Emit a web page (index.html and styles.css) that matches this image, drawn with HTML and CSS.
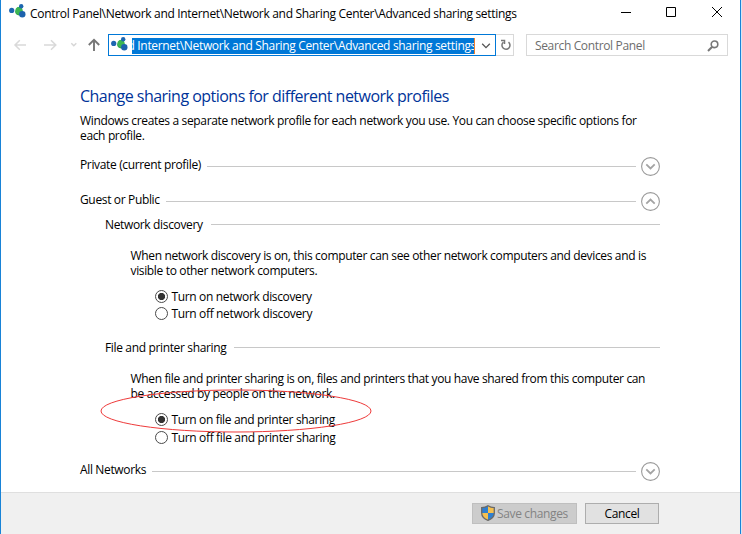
FILE: index.html
```
<!DOCTYPE html>
<html lang="en">
<head>
<meta charset="utf-8">
<title>Advanced sharing settings</title>
<link rel="stylesheet" href="styles.css">
</head>
<body>
<svg width="0" height="0" class="defs" aria-hidden="true">
  <symbol id="net" viewBox="0 0 17 14">
    <circle cx="2.7" cy="6.4" r="2.6" fill="#1d66b0"/>
    <path d="M8.5 3.2 12 2.2 14 8.5 10.5 11.5C8 11.7 6 9.8 6.1 7.6Z" fill="#2da34a"/>
    <circle cx="10" cy="6.6" r="3.6" fill="#3cb653"/>
    <circle cx="12.2" cy="2.3" r="2.2" fill="#1d66b0"/>
    <circle cx="13.3" cy="10.3" r="3.2" fill="#1d62ad"/>
  </symbol>
  <symbol id="down" viewBox="0 0 19 19">
    <circle cx="9.5" cy="9.5" r="8.9" fill="none" stroke="#9a9a9a" stroke-width="1.1"/>
    <path d="M5.300 7.300 9.500 11.400 13.700 7.300" fill="none" stroke="#a3a3a3" stroke-width="1.8"/>
  </symbol>
</svg>
<div class="window">
  <header class="titlebar">
    <svg class="net"><use href="#net"/></svg>
    <span class="title">Control Panel\Network and Internet\Network and Sharing Center\Advanced sharing settings</span>
    <svg class="controls" viewBox="0 0 112 14" fill="none" stroke="#000" stroke-width="1">
      <path d="M0 7.5H10M45.5 2.5H54.5V11.5H45.5ZM91 2 101 12M101 2 91 12"/>
    </svg>
  </header>
  <nav class="navbar">
    <svg class="arrows" viewBox="0 0 107 22" fill="none">
      <path d="M26 11H15M19.800 6.200 15 11 19.800 15.800M44 11H55.500M51 6.200 55.800 11 51 15.800" stroke="#d9d9d9" stroke-width="1.500"/>
      <path d="M71.300 9.300 73.800 11.800 76.300 9.300" stroke="#d5d5d5" stroke-width="1.400"/>
      <path d="M94 17V6M88.800 11 94 5.800 99.200 11" stroke="#777" stroke-width="1.900"/>
    </svg>
    <div class="address">
      <svg class="net"><use href="#net"/></svg>
      <div class="selection"><span>d Internet\Network and Sharing Center\Advanced sharing settings</span></div>
      <svg class="caret" viewBox="0 0 10 8"><path d="M1.200 1.800 5 5.600 8.800 1.800" fill="none" stroke="#555" stroke-width="1.300"/></svg>
    </div>
    <div class="refresh">
      <svg viewBox="0 0 12 12"><path d="M3.300 3.200A4 4 0 1 0 8.500 3.100M1 1.500H4.500V5" fill="none" stroke="#777" stroke-width="1.500"/></svg>
    </div>
    <div class="search">
      <span>Search Control Panel</span>
      <svg viewBox="0 0 12 12" fill="none" stroke="#777"><circle cx="7.500" cy="4.300" r="3.300" stroke-width="1.600"/><path d="M5.200 6.800 1 11" stroke-width="2"/></svg>
    </div>
  </nav>
  <main class="content">
    <h1>Change sharing options for different network profiles</h1>
    <p class="intro">Windows creates a separate network profile for each network you use. You can choose specific options for<br>each profile.</p>
    <div class="group private">
      <span>Private (current profile)</span><i class="rule"></i><svg class="chev"><use href="#down"/></svg>
    </div>
    <div class="group guest">
      <span>Guest or Public</span><i class="rule"></i><svg class="chev up"><use href="#down"/></svg>
    </div>
    <section class="discovery">
      <h2><span>Network discovery</span><i class="rule"></i></h2>
      <p>When network discovery is on, this computer can see other network computers and devices and is<br>visible to other network computers.</p>
      <div class="option"><i class="radio on"></i><span>Turn on network discovery</span></div>
      <div class="option"><i class="radio"></i><span>Turn off network discovery</span></div>
    </section>
    <section class="printer">
      <h2><span>File and printer sharing</span><i class="rule"></i></h2>
      <p>When file and printer sharing is on, files and printers that you have shared from this computer can<br>be accessed by people on the network.</p>
      <div class="option"><i class="radio on"></i><span>Turn on file and printer sharing</span></div>
      <div class="option"><i class="radio"></i><span>Turn off file and printer sharing</span></div>
      <svg class="mark" viewBox="0 0 272 44"><ellipse cx="136" cy="22" rx="135" ry="21" fill="none" stroke="#ee3a3a" stroke-width="1"/></svg>
    </section>
    <div class="group all">
      <span>All Networks</span><i class="rule"></i><svg class="chev"><use href="#down"/></svg>
    </div>
  </main>
  <footer class="footer">
    <button class="save" disabled>
      <svg viewBox="0 0 14 16"><path d="M7 .6C9 2 11 2.500 13.400 2.500V8C13.400 11.500 10.500 14 7 15.400 3.500 14 .6 11.500 .6 8V2.500C3 2.500 5 2 7 .6Z" fill="#f5c04f"/><path d="M7 .6V8H.6V2.500C3 2.500 5 2 7 .6ZM7 8H13.400C13.400 11.500 10.500 14 7 15.400Z" fill="#2f7fd0"/><path d="M7 .8C9 2.200 11 2.600 13.300 2.600V8C13.300 11.500 10.500 14 7 15.300 3.500 14 .7 11.500 .7 8V2.600C3 2.600 5 2.200 7 .8Z" fill="none" stroke="#6a6a6a" stroke-width="1.300"/></svg><span>Save changes</span>
    </button>
    <button class="cancel">Cancel</button>
  </footer>
</div>
</body>
</html>
```
FILE: styles.css
```
* { box-sizing: border-box; }
body {
  margin: 0;
  width: 742px;
  height: 534px;
  overflow: hidden;
  background: #d6e6f5;
  color: #000;
  font: 12px/15px "Open Sans", "Noto Sans", sans-serif;
  letter-spacing: -0.35px;
  white-space: nowrap;
}
svg { display: block; flex: none; }
.defs { display: none; }
.window {
  width: 741px;
  height: 534px;
  background: #fff;
  border: solid #1883d7;
  border-width: 0 1px;
  display: flex;
  flex-direction: column;
}
.net { width: 17px; height: 14px; }

.titlebar {
  height: 34px;
  padding: 4px 7px 0 8px;
  display: flex;
  align-items: flex-start;
}
.title { flex: 1; margin: 2px 0 0 4px; letter-spacing: -0.315px; }
.controls { width: 112px; height: 14px; margin-top: 1px; }

.navbar { height: 22px; display: flex; margin-left: -1px; }
.arrows { width: 107px; height: 22px; }
.address {
  width: 388px;
  margin-left: 1px;
  border: 1px solid #0078d7;
  display: flex;
  align-items: flex-start;
  padding: 2px 4px 0 2px;
}
.selection {
  width: 345px;
  height: 16px;
  margin: 1px 0 0 4px;
  background: #0078d7;
  color: #fff;
  overflow: hidden;
  display: flex;
  justify-content: flex-end;
  border-right: 1px solid #f08030;
  letter-spacing: -0.325px;
}
.selection span { margin-right: -2px; }
.caret { width: 10px; height: 8px; margin: 5px 0 0 6px; }
.refresh {
  width: 18px;
  border: 1px solid #d9d9d9;
  border-left: 0;
  padding: 4px 0 0 4px;
}
.refresh svg { width: 12px; height: 12px; }
.search {
  width: 202px;
  margin-left: 12px;
  border: 1px solid #d9d9d9;
  display: flex;
  justify-content: space-between;
  align-items: center;
  padding: 0 8px;
  color: #6d6d6d;
}
.search svg { width: 12px; height: 12px; margin-top: 1px; }

.content { width: 580px; height: 436px; margin-left: 79px; padding-top: 28px; }
h1 {
  margin: 0;
  font-size: 16px;
  font-weight: 400;
  line-height: 24px;
  letter-spacing: -0.52px;
  color: #003399;
}
p { margin: 0; }
.intro { margin-top: 5px; }
.group { height: 19px; display: flex; align-items: flex-start; }
.group .rule { margin: 9px 5px 0 6px; }
.rule { flex: 1; height: 1px; background: #c8c8c8; }
.chev { width: 19px; height: 19px; }
.up { transform: rotate(180deg); }
.private { margin-top: 14px; }
.guest { margin-top: 16px; }
section { padding-left: 25px; position: relative; }
h2 { margin: 0; font: inherit; display: flex; }
h2 .rule { margin: 7px 0 0 8px; }
section p { margin: 16px 0 10px 25.500px; }
.option { display: flex; align-items: center; height: 17px; padding-left: 50px; }
.radio {
  width: 13px;
  height: 13px;
  margin-right: 3.500px;
  border: 1px solid #4a4a4a;
  border-radius: 50%;
  background: #fff;
}
.radio.on { background: radial-gradient(circle, #333 3.2px, #fff 4px); }
.discovery { margin-top: 6px; height: 123px; }
.printer { height: 122px; }
.printer p { margin-bottom: 9px; }
.printer .option { height: 18px; }
.mark { position: absolute; left: 20px; top: 49px; width: 272px; height: 44px; }

.footer {
  flex: 1;
  background: #f0f0f0;
  border-top: 1px solid #dfdfdf;
  display: flex;
  gap: 8px;
  padding: 10px 0 0 471px;
}
button {
  height: 21px;
  padding: 0;
  font: inherit;
  letter-spacing: inherit;
  border: 1px solid #adadad;
  background: #e1e1e1;
  color: #000;
  display: flex;
  justify-content: center;
  align-items: center;
}
.save { width: 105px; background: #ccc; border-color: #bfbfbf; color: #838383; }
.save svg { width: 14px; height: 16px; margin-right: 2px; margin-bottom: 2px; }
.cancel { width: 74px; }
```
